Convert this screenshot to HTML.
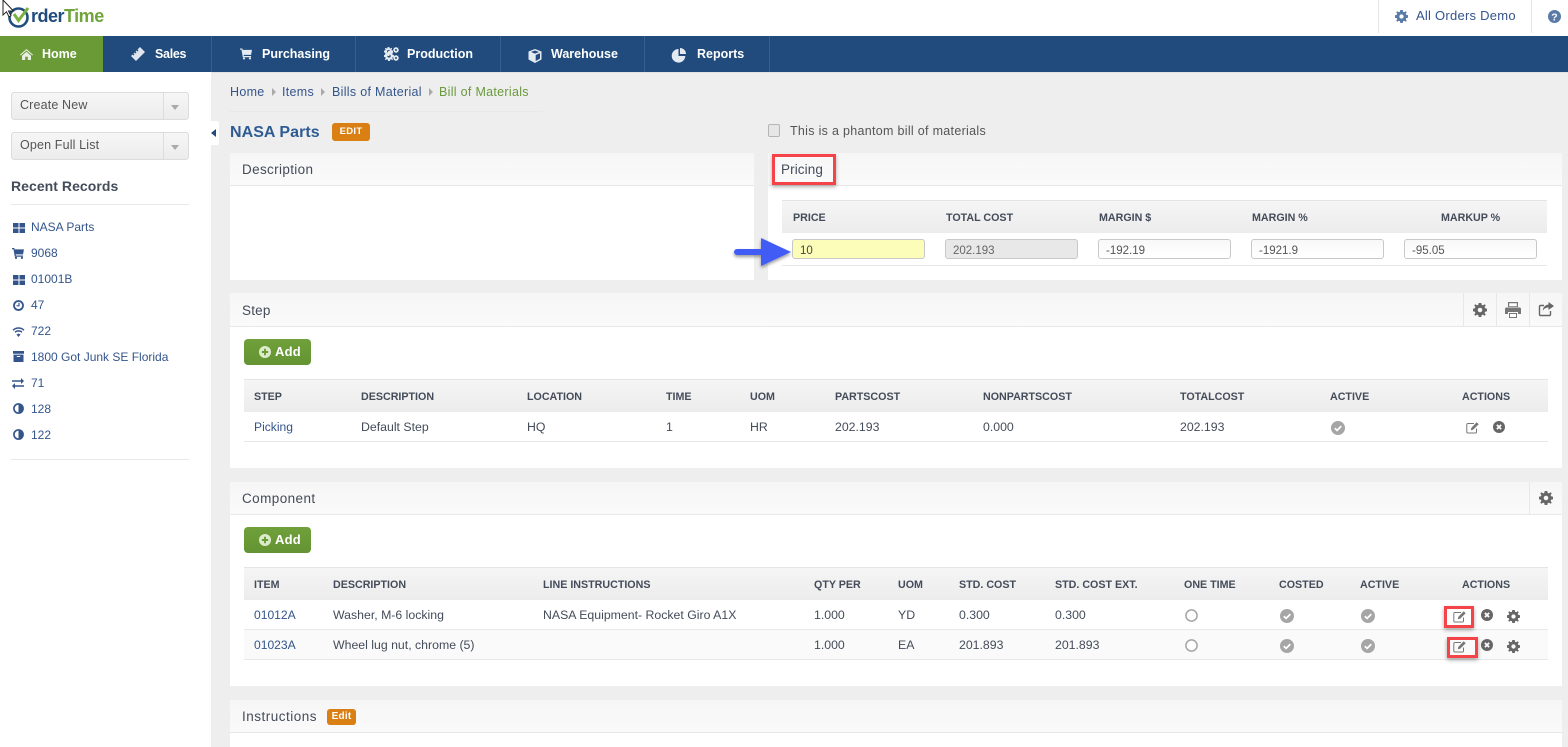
<!DOCTYPE html>
<html><head><meta charset="utf-8"><title>Order Time</title>
<style>
*{box-sizing:border-box}
html,body{margin:0;padding:0;width:1568px;height:747px;overflow:hidden;background:#eee}
body{position:relative;font-family:"Liberation Sans",sans-serif;font-size:12.3px;color:#444c5a}
.a,.t,.h,.th,.l,.n,.b{position:absolute}
.t,.h,.th,.l,.n,.b{line-height:16px;white-space:nowrap}
.t{font-size:12.3px}
.l{color:#34558b;font-size:12.1px}
.b{color:#34558b;font-size:12.5px;letter-spacing:.3px}
.h{font-size:13.5px;color:#444c5a;letter-spacing:.35px}
.th{font-weight:bold;font-size:10.7px;color:#444c5a}
.n{color:#fff;font-weight:bold;font-size:12.5px}
.panel{position:absolute;background:#fff}
.ph{position:absolute;left:0;right:0;top:0;background:linear-gradient(#f6f6f6,#fafafa);border-bottom:1px solid #e8e8e8}
.tblh{position:absolute;background:linear-gradient(#f5f5f5,#ececec);border-top:1px solid #e4e4e4}
.line{position:absolute;height:1px;background:#e8e8e8}
.inp{position:absolute;top:239px;width:133px;height:20px;border:1px solid #c8c8c8;border-radius:3px;background:linear-gradient(#f8f8f8,#fff);padding:0 7px;line-height:22px;font-size:11.5px;color:#555}
.sel{position:absolute;left:11px;width:178px;height:28px;border:1px solid #dcdcdc;border-radius:3px;background:linear-gradient(#f6f6f6,#ececec);padding-left:8px;line-height:24px;font-size:12.5px;letter-spacing:.15px;color:#555}
.sel i{position:absolute;left:151px;top:0;bottom:0;width:1px;background:#ddd}
.sel b{position:absolute;left:159px;top:12px;border:4.5px solid transparent;border-top:5px solid #aaa;border-bottom:0}
.add{position:absolute;left:244px;width:67px;height:26px;border-radius:4px;background:linear-gradient(#6fa03a,#649433);color:#fff;font-weight:bold;font-size:13px;line-height:26px;padding-left:31px;letter-spacing:.2px}
.add svg{position:absolute;left:15px;top:7px}
.red{position:absolute;border:3px solid #f4444a;box-shadow:0 2px 4px rgba(0,0,0,.35)}
svg{position:absolute;display:block;overflow:visible}
</style></head><body>
<svg width="0" height="0" style="position:absolute">
<defs>
<symbol id="gear" viewBox="0 0 14 14"><path fill="currentColor" fill-rule="evenodd" d="M5.7 0h2.6l.4 1.900 1.200.5L11.600 1.300l1.100 1.100-1.100 1.700.5 1.200L14 5.700v2.600l-1.900.4-.5 1.200 1.100 1.700-1.100 1.100-1.700-1.100-1.200.5L8.300 14H5.700l-.4-1.900-1.200-.5-1.700 1.100-1.100-1.100 1.100-1.700-.5-1.200L0 8.300V5.700l1.900-.4.500-1.200-1.100-1.700 1.100-1.100 1.700 1.100 1.200-.5zM7 4.700a2.300 2.300 0 1 0 0 4.600 2.300 2.300 0 0 0 0-4.600z"/></symbol>
<symbol id="chk" viewBox="0 0 14 14"><circle cx="7" cy="7" r="7" fill="#a6a6a6"/><path d="M3.800 7.200l2.300 2.200 4.200-4.300" fill="none" stroke="#fff" stroke-width="1.700"/></symbol>
<symbol id="x" viewBox="0 0 12 12"><circle cx="6" cy="6" r="6" fill="#666"/><path d="M3.900 3.900l4.200 4.200M8.100 3.900l-4.200 4.200" stroke="#fff" stroke-width="1.800"/></symbol>
<symbol id="edit" viewBox="0 0 14 13"><path d="M10.500 7.500V11a1 1 0 0 1-1 1H1.800a1 1 0 0 1-1-1V3.500a1 1 0 0 1 1-1H8" fill="none" stroke="#777" stroke-width="1"/><path d="M4.800 9.200l.5-2.300 5.400-5.700 2 2-5.600 5.600z" fill="#777"/></symbol>
<symbol id="grid" viewBox="0 0 12 10"><path fill="#34558b" d="M0 0h5.500v4.500H0zM6.500 0H12v4.500H6.500zM0 5.500h5.500V10H0zM6.500 5.500H12V10H6.500z"/></symbol>
<symbol id="half" viewBox="0 0 12 12"><circle cx="6" cy="6" r="5" fill="#fff" stroke="#34558b" stroke-width="1.800"/><path d="M6 1a5 5 0 0 1 0 10z" fill="#34558b"/></symbol>
<symbol id="cart" viewBox="0 0 13 12"><path fill="currentColor" d="M0 0h2.500l.4 1.500H13L12 7H4l.2 1.200H12V9.500H3L1.600 1.300H0z"/><circle cx="4.300" cy="10.800" r="1.200" fill="currentColor"/><circle cx="10.800" cy="10.800" r="1.200" fill="currentColor"/></symbol>
<symbol id="plus" viewBox="0 0 12 12"><circle cx="6" cy="6" r="6" fill="#dceccb"/><path d="M6 2.800v6.400M2.800 6h6.400" stroke="#6a9a35" stroke-width="1.900"/></symbol>
</defs></svg>

<!-- header -->
<div class="a" style="left:0;top:0;width:1568px;height:36px;background:#fff"></div>
<svg style="left:6px;top:5px" width="26" height="22" viewBox="0 0 26 22"><circle cx="12.500" cy="12.500" r="9" fill="none" stroke="#1f4d7f" stroke-width="2.600"/><path d="M8 9l4.500 6.500L22 3" fill="none" stroke="#7ab13f" stroke-width="3"/></svg>
<div class="t" style="left:31px;top:4px;font-size:18px;line-height:24px;font-weight:bold;color:#204b7c;letter-spacing:-.5px">rder<span style="color:#6fa53a">Time</span></div>
<svg style="left:2px;top:0" width="14" height="18" viewBox="0 0 14 18"><path d="M1 0v15l3.500-3.200 2.500 5 2-1-2.500-4.800h5z" fill="#fff" stroke="#222" stroke-width="1"/></svg>
<div class="a" style="left:1378px;top:0;width:1px;height:33px;background:#e6e6e6"></div>
<div class="a" style="left:1531px;top:0;width:1px;height:33px;background:#e6e6e6"></div>
<svg style="left:1395px;top:10px;color:#5a7aa8" width="13" height="13"><use href="#gear"/></svg>
<div class="l" style="left:1416px;top:8px;font-size:13px;letter-spacing:.25px">All Orders Demo</div>
<svg style="left:1548px;top:10px" width="13" height="13" viewBox="0 0 13 13"><circle cx="6.500" cy="6.500" r="6.500" fill="#5a7aa8"/><text x="6.500" y="10.300" text-anchor="middle" font-family="Liberation Sans" font-size="10.500" font-weight="bold" fill="#fff">?</text></svg>

<!-- nav -->
<div class="a" style="left:0;top:36px;width:1568px;height:36px;background:#204b7c"></div>
<div class="a" style="left:212px;top:72px;width:1356px;height:1px;background:#e2e2e2"></div>
<div class="a" style="left:0;top:36px;width:103px;height:36px;background:#6a9a35"></div>
<div class="a" style="left:211px;top:36px;width:1px;height:36px;background:#37608d"></div>
<div class="a" style="left:355px;top:36px;width:1px;height:36px;background:#37608d"></div>
<div class="a" style="left:500px;top:36px;width:1px;height:36px;background:#37608d"></div>
<div class="a" style="left:644px;top:36px;width:1px;height:36px;background:#37608d"></div>
<div class="a" style="left:769px;top:36px;width:1px;height:36px;background:#37608d"></div>
<svg style="left:20px;top:49px" width="13" height="11" viewBox="0 0 13 11"><path fill="#e8efe0" d="M6.500 0L13 5.700l-.7.800L6.500 1.500.7 6.500 0 5.700zM2 6.700l4.500-3.900L11 6.700V11H7.800V7.800H5.200V11H2z"/></svg>
<div class="n" style="left:42px;top:46px">Home</div>
<svg style="left:131px;top:47px" width="14" height="14" viewBox="0 0 14 14"><path fill="#dfe6ef" d="M9 0l5 5-9 9-5-5 1.500-1.500 1 1 1-1-1-1 1-1 1 1 1-1-1-1 1-1 1 1 1-1-1-1z"/></svg>
<div class="n" style="left:155px;top:46px;letter-spacing:-.3px">Sales</div>
<svg style="left:240px;top:48px;color:#e4eaf2" width="12" height="12"><use href="#cart"/></svg>
<div class="n" style="left:262px;top:46px">Purchasing</div>
<svg style="left:384px;top:47px;color:#e4eaf2" width="9" height="9"><use href="#gear"/></svg>
<svg style="left:384px;top:51px;color:#e4eaf2" width="10" height="10"><use href="#gear"/></svg>
<svg style="left:393px;top:47px;color:#e4eaf2" width="6" height="6"><use href="#gear"/></svg>
<svg style="left:393px;top:55px;color:#e4eaf2" width="6" height="6"><use href="#gear"/></svg>
<div class="n" style="left:407px;top:46px">Production</div>
<svg style="left:528px;top:49px" width="14" height="14" viewBox="0 0 14 14"><path fill="#e4eaf2" d="M7 0l6.500 2.500v8L7 14 .5 10.500v-8zM7 1.500L3 3l4 1.600L11 3zM7.700 6v6l4.300-2.400V4.300z"/></svg>
<div class="n" style="left:551px;top:46px">Warehouse</div>
<svg style="left:672px;top:48px" width="15" height="14" viewBox="0 0 15 14"><path fill="#e4eaf2" d="M6.500 1v7h6.800A6.800 6.800 0 1 1 6.500 1zM8 0a6 6 0 0 1 6 6H8z"/></svg>
<div class="n" style="left:697px;top:46px">Reports</div>

<!-- sidebar -->
<div class="a" style="left:0;top:72px;width:211px;height:675px;background:#fff"></div>
<div class="a" style="left:211px;top:121px;width:8px;height:24px;background:#fff;border-radius:0 2px 2px 0"></div>
<div class="a" style="left:211px;top:129px;border:4px solid transparent;border-right:5px solid #204b7c;border-left:0"></div>
<div class="sel" style="top:92px">Create New<i></i><b></b></div>
<div class="sel" style="top:132px">Open Full List<i></i><b></b></div>
<div class="t" style="left:11px;top:178px;font-size:14px;font-weight:bold;letter-spacing:.05px;color:#444c5a">Recent Records</div>
<div class="line" style="left:11px;top:204px;width:178px"></div>
<svg style="left:13px;top:223px" width="12" height="10"><use href="#grid"/></svg><div class="l" style="left:31px;top:219px;font-size:12px">NASA Parts</div>
<svg style="left:12px;top:248px;color:#34558b" width="12" height="11"><use href="#cart"/></svg><div class="l" style="left:31px;top:245px;font-size:12px">9068</div>
<svg style="left:13px;top:275px" width="12" height="10"><use href="#grid"/></svg><div class="l" style="left:31px;top:271px;font-size:12px">01001B</div>
<svg style="left:13px;top:300px" width="11" height="11" viewBox="0 0 11 11"><circle cx="5.500" cy="5.500" r="4.500" fill="none" stroke="#34558b" stroke-width="1.800"/><path d="M6 2.800v3H3.500" fill="none" stroke="#34558b" stroke-width="1.200"/></svg><div class="l" style="left:31px;top:297px;font-size:12px">47</div>
<svg style="left:12px;top:327px" width="13" height="10" viewBox="0 0 13 10"><path d="M1 3.200a8 8 0 0 1 11 0M3 5.300a5 5 0 0 1 7 0" fill="none" stroke="#34558b" stroke-width="1.400"/><path d="M6.500 6.500L8.500 7.500 6.500 10 4.500 7.500z" fill="#34558b"/></svg><div class="l" style="left:31px;top:323px;font-size:12px">722</div>
<svg style="left:13px;top:351px" width="11" height="11" viewBox="0 0 11 11"><path fill="#34558b" d="M0 0h11v2.800H0zM.5 3.600h10V11H.5z"/><path fill="#fff" d="M3.800 5h3.400v1H3.800z"/></svg><div class="l" style="left:31px;top:349px;font-size:12px">1800 Got Junk SE Florida</div>
<svg style="left:12px;top:378px" width="12" height="11" viewBox="0 0 12 11"><path fill="#34558b" d="M0 2.300h9V0l3 3-3 3V3.800H0zM12 7.200H3V5L0 8l3 3V8.700h9z"/></svg><div class="l" style="left:31px;top:375px;font-size:12px">71</div>
<svg style="left:13px;top:403px" width="11" height="11"><use href="#half"/></svg><div class="l" style="left:31px;top:401px;font-size:12px">128</div>
<svg style="left:13px;top:429px" width="11" height="11"><use href="#half"/></svg><div class="l" style="left:31px;top:427px;font-size:12px">122</div>
<div class="line" style="left:11px;top:459px;width:178px"></div>

<!-- breadcrumb -->
<div class="b" style="left:230px;top:84px">Home</div>
<div class="a" style="left:272px;top:88px;border:4px solid transparent;border-left:4px solid #aaa;border-right:0"></div>
<div class="b" style="left:282px;top:84px">Items</div>
<div class="a" style="left:321px;top:88px;border:4px solid transparent;border-left:4px solid #aaa;border-right:0"></div>
<div class="b" style="left:332px;top:84px">Bills of Material</div>
<div class="a" style="left:429px;top:88px;border:4px solid transparent;border-left:4px solid #aaa;border-right:0"></div>
<div class="b" style="left:439px;top:84px;color:#6a9a3c">Bill of Materials</div>
<div class="line" style="left:230px;top:111px;width:313px"></div>

<div class="t" style="left:230px;top:123px;font-size:16px;line-height:20px;font-weight:bold;color:#2f5b93;letter-spacing:.05px">NASA Parts</div>
<div class="a" style="left:332px;top:123px;width:38px;height:18px;background:#d97f14;border-radius:3px;color:#fff;font-weight:bold;font-size:9.500px;line-height:18px;text-align:center;letter-spacing:.3px">EDIT</div>

<div class="a" style="left:768px;top:124px;width:12px;height:13px;background:#e6e6e6;border:1px solid #b4b4b4;border-radius:2px"></div>
<div class="t" style="left:790px;top:123px;font-size:12.5px;color:#555;letter-spacing:.3px">This is a phantom bill of materials</div>

<!-- description -->
<div class="panel" style="left:230px;top:153px;width:524px;height:127px"><div class="ph" style="height:33px"></div></div>
<div class="h" style="left:242px;top:162px">Description</div>

<!-- pricing -->
<div class="panel" style="left:768px;top:153px;width:794px;height:127px"><div class="ph" style="height:33px"></div></div>
<div class="h" style="left:781px;top:162px;letter-spacing:.1px">Pricing</div>
<div class="a" style="left:772px;top:154px;width:64px;height:31px;border:3px solid #f4444a;box-shadow:0 2px 4px rgba(0,0,0,.3)"></div>
<div class="tblh" style="left:782px;top:200px;width:765px;height:33px"></div>
<div class="th" style="left:793px;top:210px">PRICE</div>
<div class="th" style="left:946px;top:210px">TOTAL COST</div>
<div class="th" style="left:1099px;top:210px">MARGIN $</div>
<div class="th" style="left:1252px;top:210px">MARGIN %</div>
<div class="th" style="left:1441px;top:210px">MARKUP %</div>
<div class="inp" style="left:792px;background:#fbfdb8;color:#444">10</div>
<div class="inp" style="left:945px;background:#e8e8e8;color:#666">202.193</div>
<div class="inp" style="left:1098px">-192.19</div>
<div class="inp" style="left:1251px">-1921.9</div>
<div class="inp" style="left:1404px">-95.05</div>
<div class="line" style="left:782px;top:265px;width:765px"></div>
<svg style="left:734px;top:237px" width="58" height="30" viewBox="0 0 58 30"><defs><filter id="s" x="-20%" y="-20%" width="140%" height="160%"><feDropShadow dx="0" dy="2" stdDeviation="1.500" flood-color="#000" flood-opacity=".4"/></filter></defs><path filter="url(#s)" fill="#3f5bf5" d="M27 1l30 14-30 14v-11H3a3 3 0 0 1 0-6h24z"/></svg>

<!-- step -->
<div class="panel" style="left:230px;top:293px;width:1332px;height:175px"><div class="ph" style="height:34px"></div></div>
<div class="h" style="left:242px;top:303px;letter-spacing:.2px">Step</div>
<div class="a" style="left:1463px;top:293px;width:1px;height:33px;background:#e8e8e8"></div>
<div class="a" style="left:1496px;top:293px;width:1px;height:33px;background:#e8e8e8"></div>
<div class="a" style="left:1529px;top:293px;width:1px;height:33px;background:#e8e8e8"></div>
<svg style="left:1473px;top:303px;color:#666" width="14" height="14"><use href="#gear"/></svg>
<svg style="left:1505px;top:302px" width="16" height="16" viewBox="0 0 16 16"><path fill="#777" d="M3 0h10v5H3zM1.500 5.500h13A1.500 1.500 0 0 1 16 7v5h-3v-2H3v2H0V7a1.500 1.500 0 0 1 1.500-1.500zM4 11h8v5H4z"/><path fill="#fff" d="M4.200 1.200h7.600v3H4.200zM5 12h6v3H5z"/></svg>
<svg style="left:1538px;top:302px" width="16" height="15" viewBox="0 0 16 15"><path d="M6 3.500H2.500a1 1 0 0 0-1 1v8a1 1 0 0 0 1 1h9a1 1 0 0 0 1-1V9" fill="none" stroke="#666" stroke-width="1.400"/><path fill="#666" d="M10.500 0L16 4l-5.500 4V5.500C8 5.500 6 6.500 4.800 9c0-4 2.500-6 5.700-6.500z"/></svg>
<div class="add" style="top:339px"><svg width="12" height="12"><use href="#plus"/></svg>Add</div>
<div class="tblh" style="left:244px;top:379px;width:1304px;height:33px"></div>
<div class="th" style="left:254px;top:389px">STEP</div>
<div class="th" style="left:361px;top:389px">DESCRIPTION</div>
<div class="th" style="left:527px;top:389px">LOCATION</div>
<div class="th" style="left:666px;top:389px">TIME</div>
<div class="th" style="left:750px;top:389px">UOM</div>
<div class="th" style="left:835px;top:389px">PARTSCOST</div>
<div class="th" style="left:983px;top:389px">NONPARTSCOST</div>
<div class="th" style="left:1180px;top:389px">TOTALCOST</div>
<div class="th" style="left:1330px;top:389px">ACTIVE</div>
<div class="th" style="left:1462px;top:389px">ACTIONS</div>
<div class="l" style="left:254px;top:419px">Picking</div>
<div class="t" style="left:361px;top:419px">Default Step</div>
<div class="t" style="left:527px;top:419px">HQ</div>
<div class="t" style="left:666px;top:419px">1</div>
<div class="t" style="left:750px;top:419px">HR</div>
<div class="t" style="left:835px;top:419px">202.193</div>
<div class="t" style="left:983px;top:419px">0.000</div>
<div class="t" style="left:1180px;top:419px">202.193</div>
<svg style="left:1331px;top:421px" width="14" height="14"><use href="#chk"/></svg>
<svg style="left:1466px;top:421px" width="14" height="13"><use href="#edit"/></svg>
<svg style="left:1493px;top:421px" width="12" height="12"><use href="#x"/></svg>
<div class="line" style="left:244px;top:441px;width:1304px"></div>

<!-- component -->
<div class="panel" style="left:230px;top:482px;width:1332px;height:204px"><div class="ph" style="height:33px"></div></div>
<div class="h" style="left:242px;top:491px;letter-spacing:.42px">Component</div>
<div class="a" style="left:1529px;top:482px;width:1px;height:33px;background:#e8e8e8"></div>
<svg style="left:1539px;top:491px;color:#666" width="14" height="14"><use href="#gear"/></svg>
<div class="add" style="top:527px"><svg width="12" height="12"><use href="#plus"/></svg>Add</div>
<div class="tblh" style="left:244px;top:567px;width:1304px;height:33px"></div>
<div class="th" style="left:254px;top:577px">ITEM</div>
<div class="th" style="left:333px;top:577px">DESCRIPTION</div>
<div class="th" style="left:543px;top:577px">LINE INSTRUCTIONS</div>
<div class="th" style="left:814px;top:577px">QTY PER</div>
<div class="th" style="left:898px;top:577px">UOM</div>
<div class="th" style="left:959px;top:577px">STD. COST</div>
<div class="th" style="left:1055px;top:577px">STD. COST EXT.</div>
<div class="th" style="left:1184px;top:577px">ONE TIME</div>
<div class="th" style="left:1279px;top:577px">COSTED</div>
<div class="th" style="left:1360px;top:577px">ACTIVE</div>
<div class="th" style="left:1462px;top:577px">ACTIONS</div>
<div class="a" style="left:244px;top:630px;width:1304px;height:30px;background:#fafafa"></div>
<div class="line" style="left:244px;top:629px;width:1304px"></div>
<div class="line" style="left:244px;top:659px;width:1304px"></div>

<div class="l" style="left:254px;top:607px">01012A</div>
<div class="t" style="left:333px;top:607px">Washer, M-6 locking</div>
<div class="t" style="left:543px;top:607px">NASA Equipment- Rocket Giro A1X</div>
<div class="t" style="left:814px;top:607px">1.000</div>
<div class="t" style="left:898px;top:607px">YD</div>
<div class="t" style="left:959px;top:607px">0.300</div>
<div class="t" style="left:1055px;top:607px">0.300</div>
<svg style="left:1185px;top:609px" width="13" height="13" viewBox="0 0 13 13"><circle cx="6.500" cy="6.500" r="5.600" fill="#fff" stroke="#a6a6a6" stroke-width="1.500"/></svg>
<svg style="left:1280px;top:609px" width="14" height="14"><use href="#chk"/></svg>
<svg style="left:1361px;top:609px" width="14" height="14"><use href="#chk"/></svg>
<svg style="left:1453px;top:610px" width="14" height="13"><use href="#edit"/></svg>
<svg style="left:1481px;top:609px" width="12" height="12"><use href="#x"/></svg>
<svg style="left:1507px;top:610px;color:#666" width="13" height="13"><use href="#gear"/></svg>
<div class="red" style="left:1444px;top:606px;width:30px;height:22px"></div>

<div class="l" style="left:254px;top:637px">01023A</div>
<div class="t" style="left:333px;top:637px">Wheel lug nut, chrome (5)</div>
<div class="t" style="left:814px;top:637px">1.000</div>
<div class="t" style="left:898px;top:637px">EA</div>
<div class="t" style="left:959px;top:637px">201.893</div>
<div class="t" style="left:1055px;top:637px">201.893</div>
<svg style="left:1185px;top:639px" width="13" height="13" viewBox="0 0 13 13"><circle cx="6.500" cy="6.500" r="5.600" fill="#fff" stroke="#a6a6a6" stroke-width="1.500"/></svg>
<svg style="left:1280px;top:639px" width="14" height="14"><use href="#chk"/></svg>
<svg style="left:1361px;top:639px" width="14" height="14"><use href="#chk"/></svg>
<svg style="left:1453px;top:640px" width="14" height="13"><use href="#edit"/></svg>
<svg style="left:1481px;top:639px" width="12" height="12"><use href="#x"/></svg>
<svg style="left:1507px;top:640px;color:#666" width="13" height="13"><use href="#gear"/></svg>
<div class="red" style="left:1447px;top:637px;width:31px;height:21px"></div>

<!-- instructions -->
<div class="panel" style="left:230px;top:700px;width:1332px;height:47px"><div class="ph" style="height:33px"></div></div>
<div class="h" style="left:242px;top:709px;letter-spacing:.5px">Instructions</div>
<div class="a" style="left:327px;top:709px;width:29px;height:16px;background:#d97f14;border-radius:3px;color:#fff;font-weight:bold;font-size:10px;line-height:16px;text-align:center;letter-spacing:.2px">Edit</div>
</body></html>
